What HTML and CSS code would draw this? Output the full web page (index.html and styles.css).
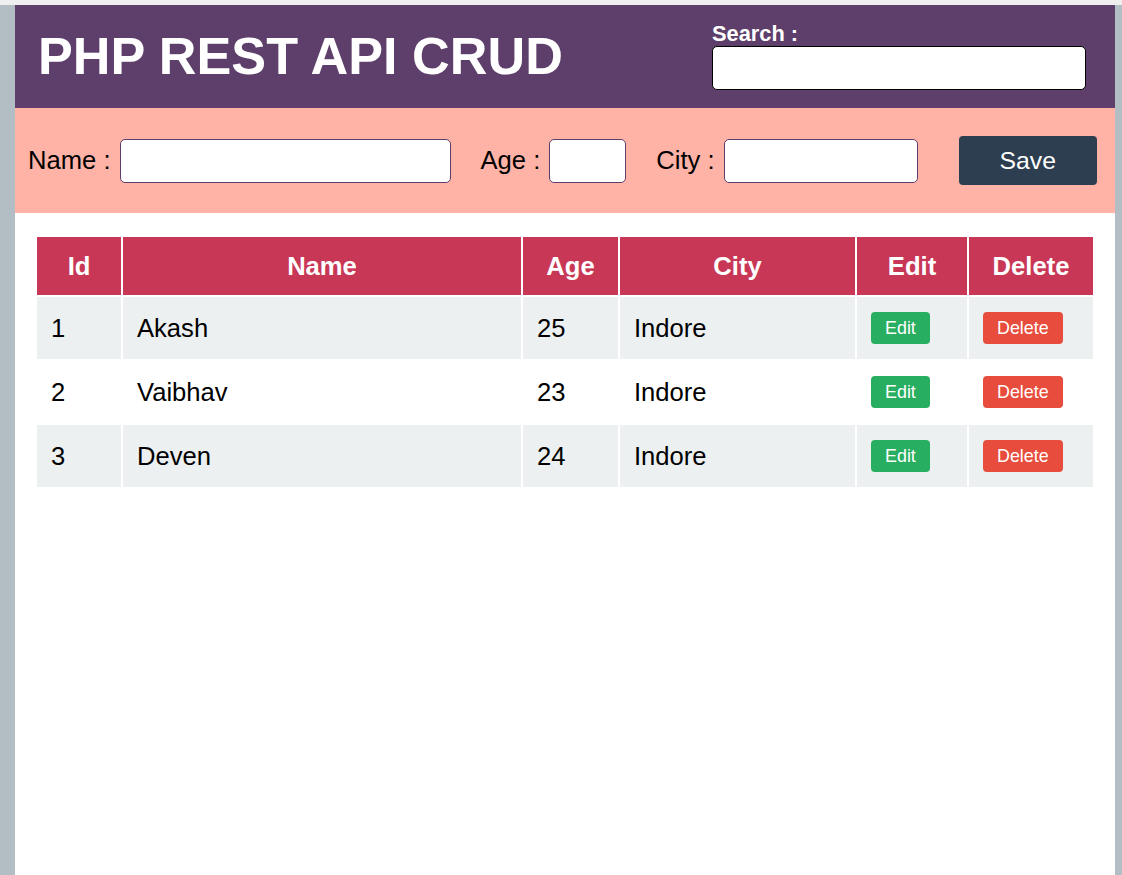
FILE: index.html
```html
<!DOCTYPE html>
<html lang="en">
<head>
<meta charset="utf-8">
<title>PHP REST API CRUD</title>
<link rel="stylesheet" href="styles.css">
</head>
<body>
<div class="page">
  <div class="main">
    <header class="header">
      <h1 class="title">PHP REST API CRUD</h1>
      <div class="search">
        <label class="search-label" for="search">Search :</label>
        <input class="search-input" id="search" type="text">
      </div>
    </header>
    <form class="entry">
      <label class="field"><span class="field-text">Name :</span><input class="inp inp-name" type="text"></label>
      <label class="field"><span class="field-text">Age :</span><input class="inp inp-age" type="text"></label>
      <label class="field"><span class="field-text">City :</span><input class="inp inp-city" type="text"></label>
      <button class="save" type="button">Save</button>
    </form>
    <table class="grid">
      <thead>
        <tr>
          <th class="c-id">Id</th>
          <th class="c-name">Name</th>
          <th class="c-age">Age</th>
          <th class="c-city">City</th>
          <th class="c-edit">Edit</th>
          <th class="c-del">Delete</th>
        </tr>
      </thead>
      <tbody>
        <tr>
          <td>1</td><td>Akash</td><td>25</td><td>Indore</td>
          <td><button class="btn btn-edit" type="button">Edit</button></td>
          <td><button class="btn btn-del" type="button">Delete</button></td>
        </tr>
        <tr>
          <td>2</td><td>Vaibhav</td><td>23</td><td>Indore</td>
          <td><button class="btn btn-edit" type="button">Edit</button></td>
          <td><button class="btn btn-del" type="button">Delete</button></td>
        </tr>
        <tr>
          <td>3</td><td>Deven</td><td>24</td><td>Indore</td>
          <td><button class="btn btn-edit" type="button">Edit</button></td>
          <td><button class="btn btn-del" type="button">Delete</button></td>
        </tr>
      </tbody>
    </table>
  </div>
</div>
</body>
</html>
```

FILE: styles.css
```css
html, body {
  margin: 0;
  padding: 0;
  background: #efefef;
}

body {
  font-family: "Liberation Sans", Arial, sans-serif;
  font-size: 25.6px;
  color: #000;
}

.page {
  margin-top: 5px;
  background: #b2bec3;
  padding: 0 7px 0 15px;
  min-height: 870px;
  display: flex;
}

.main {
  flex: 1;
  min-width: 0;
  background: #ffffff;
  display: flex;
  flex-direction: column;
}

.header {
  background: #5e3f6b;
  height: 103px;
  display: flex;
  align-items: center;
  justify-content: space-between;
  padding: 0 29px 0 23px;
  box-sizing: border-box;
}

.title {
  margin: 0;
  color: #fff;
  font-size: 52.2px;
  font-weight: bold;
  line-height: 59px;
}

.search {
  display: flex;
  flex-direction: column;
  margin-top: -2px;
}

.search-label {
  color: #fff;
  font-weight: bold;
  font-size: 21.8px;
  line-height: 25px;
}

.search-input {
  width: 374px;
  height: 44px;
  box-sizing: border-box;
  border: 1px solid #000;
  border-radius: 5px;
  background: #fff;
  margin: 0;
}

.entry {
  background: #ffb3a7;
  height: 105px;
  margin: 0;
  display: flex;
  align-items: center;
  padding: 0 18px 0 13px;
  box-sizing: border-box;
  gap: 30px;
}

.field {
  display: flex;
  align-items: center;
  gap: 9px;
  font-size: 25.6px;
  white-space: nowrap;
}

.inp {
  height: 44px;
  box-sizing: border-box;
  border: 1px solid #5e3f6b;
  border-radius: 5px;
  background: #fff;
  margin: 0;
  padding: 0 4px;
}

.inp-name { width: 331px; }
.inp-age { width: 77px; }
.inp-city { width: 194px; }

.save {
  margin-left: 11px;
  width: 139px;
  height: 49px;
  border: none;
  border-radius: 4px;
  background: #2c3e50;
  color: #fff;
  font-family: "Liberation Sans", Arial, sans-serif;
  font-size: 24.8px;
  padding: 0;
}

.grid {
  margin: 22px 0 0 20px;
  width: 1060px;
  border-collapse: separate;
  border-spacing: 2px;
  table-layout: fixed;
}

.grid th {
  background: #c83756;
  color: #fff;
  font-weight: bold;
  font-size: 25.6px;
  line-height: 30px;
  padding: 14px 15px;
  text-align: center;
  box-sizing: border-box;
}

.c-id { width: 84px; }
.c-name { width: 398px; }
.c-age { width: 95px; }
.c-city { width: 235px; }
.c-edit { width: 110px; }
.c-del { width: 124px; }

.grid td {
  font-size: 25.6px;
  line-height: 32px;
  padding: 15px 14px;
  text-align: left;
  vertical-align: middle;
}

.grid tbody tr:nth-child(odd) td {
  background: #ecf0f1;
}

.btn {
  display: inline-block;
  vertical-align: top;
  height: 32px;
  padding: 0 14px;
  border: none;
  border-radius: 4px;
  color: #fff;
  font-family: "Liberation Sans", Arial, sans-serif;
  font-size: 17.9px;
  line-height: 32px;
  margin: 0;
}

.btn-edit { background: #27ae60; }
.btn-del { background: #e74c3c; }
```
